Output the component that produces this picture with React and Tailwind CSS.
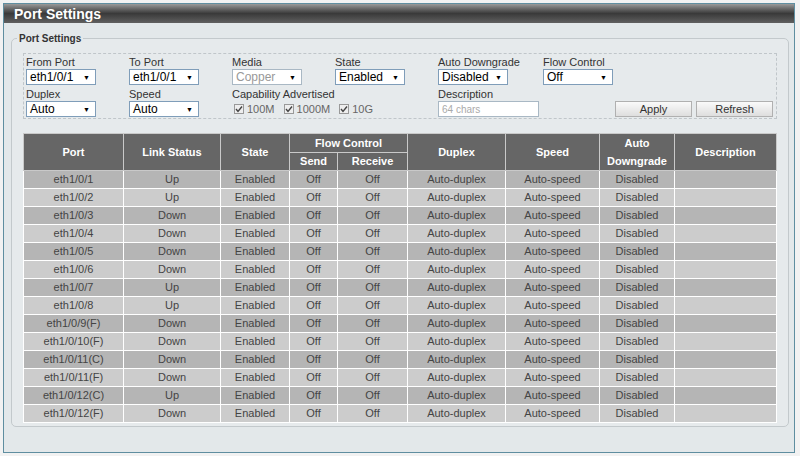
import React from "react";

const ports = [
  ["eth1/0/1", "Up"],
  ["eth1/0/2", "Up"],
  ["eth1/0/3", "Down"],
  ["eth1/0/4", "Down"],
  ["eth1/0/5", "Down"],
  ["eth1/0/6", "Down"],
  ["eth1/0/7", "Up"],
  ["eth1/0/8", "Up"],
  ["eth1/0/9(F)", "Down"],
  ["eth1/0/10(F)", "Down"],
  ["eth1/0/11(C)", "Down"],
  ["eth1/0/11(F)", "Down"],
  ["eth1/0/12(C)", "Up"],
  ["eth1/0/12(F)", "Down"],
];

function Select({ value, disabled }) {
  return (
    <div
      className={
        "w-[70px] h-[16px] bg-white border flex items-center justify-between pl-[3px] pr-[5px] text-[12px] leading-none " +
        (disabled ? "border-[#a9b8c4] text-[#999]" : "border-[#7f9db9] text-black")
      }
    >
      <span>{value}</span>
      <span className="text-[7px] text-black">▼</span>
    </div>
  );
}

function Field({ label, children, width = "w-[103px]" }) {
  return (
    <div className={"flex flex-col " + width}>
      <div className="h-[14px] leading-[14px] text-[11px] text-[#333]">{label}</div>
      {children}
    </div>
  );
}

function Check({ label }) {
  return (
    <label className="flex items-center gap-[3px] mr-[9px] text-[11px] text-[#666]">
      <span className="w-[10px] h-[10px] border border-[#999] bg-[#eee] flex items-center justify-center">
        <svg width="8" height="8" viewBox="0 0 8 8">
          <path d="M1 4 L3 6.5 L7 1.5" fill="none" stroke="#444" strokeWidth="1.4" />
        </svg>
      </span>
      {label}
    </label>
  );
}

function Btn({ children }) {
  return (
    <button className="w-[77px] h-[16px] border border-[#b0b0b0] bg-gradient-to-b from-[#fafafa] to-[#dedede] text-[11px] text-[#333] leading-none">
      {children}
    </button>
  );
}

export default function App() {
  const th = "border border-[#c9c9c9] text-white font-bold text-[11px] text-center";
  return (
    <div className="w-[800px] h-[456px] bg-[#f2f2f2] pt-[3px] pl-[3px] pr-[5px] pb-[3px] font-['Liberation_Sans',Arial,sans-serif]">
      <div className="h-full border border-[#5f8ea0] bg-[#e3e8ea] flex flex-col">
        <div className="h-[19px] bg-gradient-to-b from-[#9a9a9a] via-[#3a3a3a] to-[#606060] flex items-center pl-[10px]">
          <span className="text-white font-bold text-[14px] leading-none">Port Settings</span>
        </div>

        <div className="px-[7px] pt-[8px]">
          <fieldset className="border border-[#c3c9cc] rounded-[5px] px-[11px] pb-[3px] pt-[7px] bg-[#e6eaec]">
            <legend className="-ml-[6px] px-[2px] text-[10px] font-bold text-[#333]">Port Settings</legend>

            <div className="border border-dashed border-[#c0c6ca] h-[66px] pl-[2px] pt-[1px]">
              <div className="flex">
                <Field label="From Port"><Select value="eth1/0/1" /></Field>
                <Field label="To Port"><Select value="eth1/0/1" /></Field>
                <Field label="Media"><Select value="Copper" disabled /></Field>
                <Field label="State"><Select value="Enabled" /></Field>
                <Field label="Auto Downgrade" width="w-[105px]"><Select value="Disabled" /></Field>
                <Field label="Flow Control"><Select value="Off" /></Field>
              </div>
              <div className="flex mt-[2px]">
                <Field label="Duplex"><Select value="Auto" /></Field>
                <Field label="Speed"><Select value="Auto" /></Field>
                <Field label="Capability Advertised" width="w-[206px]">
                  <div className="h-[16px] flex items-center pl-[2px]">
                    <Check label="100M" />
                    <Check label="1000M" />
                    <Check label="10G" />
                  </div>
                </Field>
                <Field label="Description" width="w-[177px]">
                  <div className="w-[101px] h-[16px] bg-white border border-[#a9b8c4] text-[10px] text-[#aaa] pl-[3px] flex items-center">64 chars</div>
                </Field>
                <div className="flex items-end gap-[4px]">
                  <Btn>Apply</Btn>
                  <Btn>Refresh</Btn>
                </div>
              </div>
            </div>

            <table className="mt-[14px] w-[753px] table-fixed border-collapse text-[11px]">
              <colgroup>
                <col className="w-[100px]" />
                <col className="w-[97px]" />
                <col className="w-[69px]" />
                <col className="w-[48px]" />
                <col className="w-[70px]" />
                <col className="w-[98px]" />
                <col className="w-[94px]" />
                <col className="w-[75px]" />
                <col className="w-[102px]" />
              </colgroup>
              <thead className="bg-[#666666]">
                <tr className="h-[19px]">
                  <th rowSpan={2} className={th}>Port</th>
                  <th rowSpan={2} className={th}>Link Status</th>
                  <th rowSpan={2} className={th}>State</th>
                  <th colSpan={2} className={th}>Flow Control</th>
                  <th rowSpan={2} className={th}>Duplex</th>
                  <th rowSpan={2} className={th}>Speed</th>
                  <th rowSpan={2} className={th + " leading-[18px]"}>Auto<br />Downgrade</th>
                  <th rowSpan={2} className={th}>Description</th>
                </tr>
                <tr className="h-[18px]">
                  <th className={th}>Send</th>
                  <th className={th}>Receive</th>
                </tr>
              </thead>
              <tbody>
                {ports.map(([port, link], i) => (
                  <tr key={port} className={"h-[18px] text-[#444] " + (i % 2 === 0 ? "bg-[#b5b5b5]" : "bg-[#cccccc]")}>
                    <td className="border border-white text-center">{port}</td>
                    <td className="border border-white text-center">{link}</td>
                    <td className="border border-white text-center">Enabled</td>
                    <td className="border border-white text-center">Off</td>
                    <td className="border border-white text-center">Off</td>
                    <td className="border border-white text-center">Auto-duplex</td>
                    <td className="border border-white text-center">Auto-speed</td>
                    <td className="border border-white text-center">Disabled</td>
                    <td className="border border-white text-center"></td>
                  </tr>
                ))}
              </tbody>
            </table>
          </fieldset>
        </div>
      </div>
    </div>
  );
}
